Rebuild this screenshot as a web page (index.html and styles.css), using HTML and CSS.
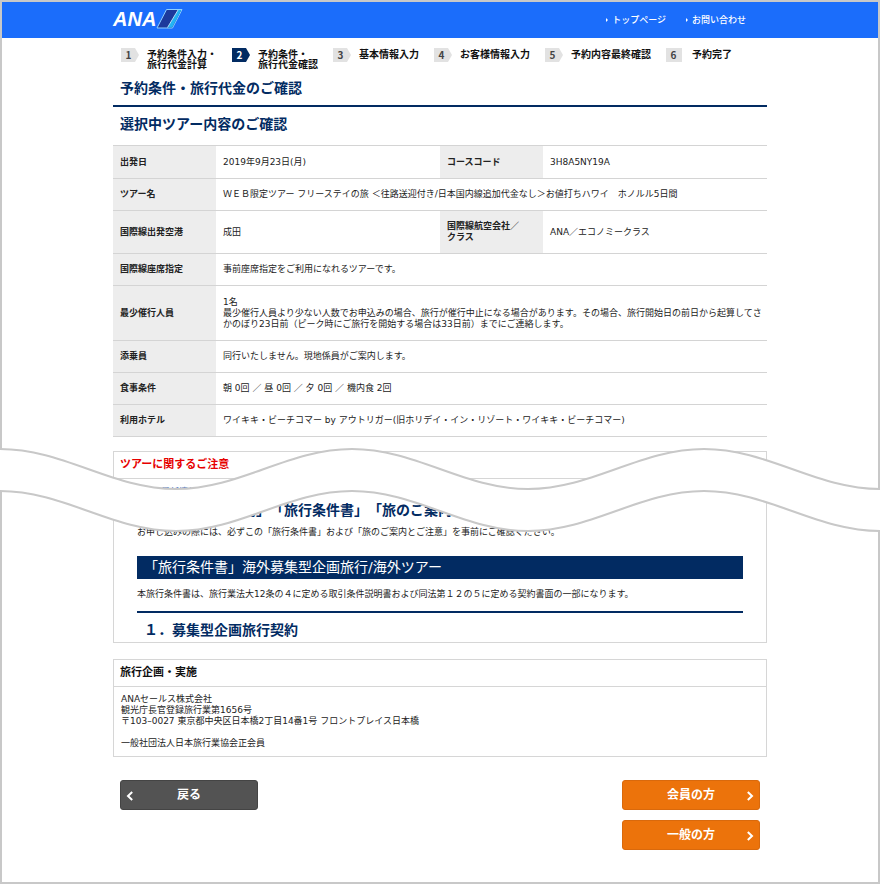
FILE: index.html
```html
<!DOCTYPE html>
<html lang="ja">
<head>
<meta charset="utf-8">
<meta name="viewport" content="width=device-width, initial-scale=1">
<title>予約条件・旅行代金のご確認</title>
<link rel="stylesheet" href="styles.css">
</head>
<body>
<div class="page">
  <header class="site-header">
    <div class="container header-row">
      <a class="logo" href="#">
        <span class="logo-word">ANA</span>
        <svg class="logo-mark" viewBox="0 0 27 20" aria-hidden="true">
          <path d="M10.500 .5H26L16.500 19H1z" fill="#1c3a9c" stroke="#8fd0ff" stroke-width="1"/>
          <path d="M22 1H25.300L16.200 18.500H11.500z" fill="#22b4f4"/>
          <path d="M22 1L11.500 18.500" stroke="#d8f2ff" stroke-width=".8"/>
        </svg>
      </a>
      <nav class="header-nav">
        <a href="#">トップページ</a>
        <a href="#">お問い合わせ</a>
      </nav>
    </div>
  </header>

  <main>
    <div class="container">
      <ol class="steps">
        <li><span class="badge">1</span><span>予約条件入力・<br>旅行代金計算</span></li>
        <li class="current" aria-current="step"><span class="badge">2</span><span>予約条件・<br>旅行代金確認</span></li>
        <li><span class="badge">3</span><span>基本情報入力</span></li>
        <li><span class="badge">4</span><span>お客様情報入力</span></li>
        <li><span class="badge">5</span><span>予約内容最終確認</span></li>
        <li><span class="badge">6</span><span>予約完了</span></li>
      </ol>

      <h1>予約条件・旅行代金のご確認</h1>
      <h2>選択中ツアー内容のご確認</h2>

      <table class="tour">
        <colgroup><col class="col-label"><col class="col-main"><col class="col-label"><col></colgroup>
        <tr class="roomy"><th scope="row">出発日</th><td>2019年9月23日(月)</td><th scope="row">コースコード</th><td>3H8A5NY19A</td></tr>
        <tr><th scope="row">ツアー名</th><td colspan="3">ＷＥＢ限定ツアー フリーステイの旅 ＜往路送迎付き/日本国内線追加代金なし＞お値打ちハワイ　ホノルル5日間</td></tr>
        <tr><th scope="row">国際線出発空港</th><td>成田</td><th scope="row">国際線航空会社／<br>クラス</th><td>ANA／エコノミークラス</td></tr>
        <tr><th scope="row">国際線座席指定</th><td colspan="3">事前座席指定をご利用になれるツアーです。</td></tr>
        <tr class="roomy"><th scope="row">最少催行人員</th><td colspan="3">1名<br>最少催行人員より少ない人数でお申込みの場合、旅行が催行中止になる場合があります。その場合、旅行開始日の前日から起算してさかのぼり23日前（ピーク時にご旅行を開始する場合は33日前）までにご連絡します。</td></tr>
        <tr><th scope="row">添乗員</th><td colspan="3">同行いたしません。現地係員がご案内します。</td></tr>
        <tr><th scope="row">食事条件</th><td colspan="3">朝 0回 ／ 昼 0回 ／ 夕 0回 ／ 機内食 2回</td></tr>
        <tr><th scope="row">利用ホテル</th><td colspan="3">ワイキキ・ビーチコマー by アウトリガー(旧ホリデイ・イン・リゾート・ワイキキ・ビーチコマー)</td></tr>
      </table>
    </div>

    <div class="torn">
      <section class="container">
        <div class="box">
          <h3 class="box-title alert">ツアーに関するご注意</h3>
          <div class="terms">
            <a class="terms-link" href="#">最新情報</a>
            <h2 class="terms-head">「ご旅行のご案内」「旅行条件書」「旅のご案内とご注意」</h2>
            <p>お申し込みの際には、必ずこの「旅行条件書」および「旅のご案内とご注意」を事前にご確認ください。</p>
            <h3 class="banner">「旅行条件書」海外募集型企画旅行/海外ツアー</h3>
            <p>本旅行条件書は、旅行業法大12条の４に定める取引条件説明書および同法第１２の５に定める契約書面の一部になります。</p>
            <h4 class="article">１．募集型企画旅行契約</h4>
          </div>
        </div>
      </section>
      <svg class="wave" viewBox="0 0 880 86" preserveAspectRatio="none" aria-hidden="true">
        <path class="wave-gap" d="M0 2C64 2 112 42 176 42S288 2 352 2S464 42 528 42S640 2 704 2S816 42 880 42V84C816 84 768 44 704 44S592 84 528 84S416 44 352 44S240 84 176 84S64 44 0 44z"/>
        <path class="wave-edge" d="M0 2C64 2 112 42 176 42S288 2 352 2S464 42 528 42S640 2 704 2S816 42 880 42"/>
        <path class="wave-edge" d="M0 44C64 44 112 84 176 84S288 44 352 44S464 84 528 84S640 44 704 44S816 84 880 84"/>
      </svg>
    </div>

    <div class="container">
      <section class="box company">
        <h3 class="box-title">旅行企画・実施</h3>
        <address>
          <p>ANAセールス株式会社<br>観光庁長官登録旅行業第1656号<br>〒103–0027 東京都中央区日本橋2丁目14番1号 フロントプレイス日本橋</p>
          <p>一般社団法人日本旅行業協会正会員</p>
        </address>
      </section>

      <div class="actions">
        <button class="btn back" type="button"><svg viewBox="0 0 8 10" aria-hidden="true"><path d="M6.200 1L2 5L6.200 9"/></svg>戻る</button>
        <div class="next-actions">
          <button class="btn next" type="button">会員の方<svg viewBox="0 0 8 10" aria-hidden="true"><path d="M1.800 1L6 5L1.800 9"/></svg></button>
          <button class="btn next" type="button">一般の方<svg viewBox="0 0 8 10" aria-hidden="true"><path d="M1.800 1L6 5L1.800 9"/></svg></button>
        </div>
      </div>
    </div>
  </main>
</div>
</body>
</html>
```
FILE: styles.css
```css
* {
  box-sizing: border-box;
}

body {
  margin: 0;
  color: #222;
  background: #fff;
  font: 9px/11px "DejaVu Sans", "Noto Sans CJK JP", sans-serif;
}

h1, h2, h3, h4, p, ol {
  margin: 0;
  padding: 0;
}

.page {
  min-height: 100vh;
  border: 2px solid #c8c8c8;
}

.container {
  max-width: 654px;
  margin: 0 auto;
}

/* Header */
.site-header {
  background: #1b6dfb;
}

.header-row {
  display: flex;
  justify-content: space-between;
  align-items: center;
  height: 36px;
  padding-right: 21px;
}

.logo {
  display: flex;
  align-items: center;
  padding-bottom: 3px;
  color: #fff;
  text-decoration: none;
}

.logo-word {
  font: italic bold 20px/20px "Liberation Sans", sans-serif;
}

.logo-mark {
  width: 27px;
  height: 20px;
}

.header-nav {
  display: flex;
  gap: 20px;
}

.header-nav a {
  display: flex;
  align-items: center;
  gap: 4px;
  color: #fff;
  font-weight: 500;
  text-decoration: none;
}

.header-nav a::before {
  content: "";
  border: 2px solid transparent;
  border-left-color: #fff;
  border-right-width: 0;
}

/* Progress */
.steps {
  display: flex;
  gap: 15px;
  padding: 10px 8px 0;
  list-style: none;
  color: #111;
  font-size: 10px;
  font-weight: 700;
  line-height: 10px;
  white-space: nowrap;
}

.steps li {
  display: flex;
  gap: 8px;
}

.steps li > span:last-child {
  padding-top: 2px;
}

.badge {
  width: 18px;
  height: 14px;
  padding-right: 3px;
  background: #e2e2e2;
  clip-path: polygon(0 0, 14px 0, 100% 50%, 14px 100%, 0 100%);
  color: #444;
  font-family: "Noto Sans CJK JP", sans-serif;
  line-height: 14px;
  text-align: center;
}

.steps li:last-child .badge {
  clip-path: inset(0 2px 0 0);
}

.current .badge {
  background: #022b62;
  color: #fff;
}

/* Headings */
h1, h2 {
  color: #022b62;
  font-size: 14px;
  line-height: 20px;
}

h1 {
  padding: 8px 7px 7px;
  border-bottom: 2px solid #022b62;
}

h2 {
  padding: 7px 7px 11px;
}

/* Tour details */
.tour {
  width: 100%;
  border-collapse: collapse;
  table-layout: fixed;
}

.col-label {
  width: 103px;
}

.col-main {
  width: 224px;
}

.tour tr {
  border-top: 1px solid #d4d4d4;
  border-bottom: 1px solid #d4d4d4;
}

.tour th,
.tour td {
  padding: 10px 0 10px 7px;
  text-align: left;
  vertical-align: middle;
}

.tour .roomy th,
.tour .roomy td {
  padding-top: 11px;
}

.tour th {
  background: #ededed;
}

/* Bordered boxes */
.box {
  border: 1px solid #d6d6d6;
}

.box-title {
  padding: 5px 6px;
  border-bottom: 1px solid #d6d6d6;
  color: #111;
  font-size: 11px;
  line-height: 16px;
}

.alert {
  color: #e60000;
}

/* Break between the two parts of the page */
.torn {
  position: relative;
  margin-top: 14px;
}

.wave {
  position: absolute;
  top: -4px;
  left: -2px;
  width: calc(100% + 4px);
  height: 86px;
}

.wave-gap {
  fill: #fff;
}

.wave-edge {
  fill: none;
  stroke: #c8c8c8;
  stroke-width: 2px;
}

.terms {
  padding: 8px 23px 2px;
}

.terms-link {
  display: block;
  padding-left: 24px;
  color: #1a52b8;
}

.terms-head {
  padding: 2px 7px 7px;
  text-spacing-trim: space-all;
}

.banner {
  margin: 18px 0 10px;
  padding: 0 7px;
  background: #022b62;
  color: #fff;
  font-size: 14px;
  font-weight: 400;
  line-height: 23px;
}

.article {
  margin-top: 11px;
  padding: 7px 7px 0;
  border-top: 2px solid #022b62;
  color: #022b62;
  font-size: 14px;
  line-height: 20px;
}

.company {
  margin-top: 16px;
}

address {
  padding: 7px;
  font-style: normal;
}

address p + p {
  margin-top: 11px;
}

/* Actions */
.actions {
  display: flex;
  justify-content: space-between;
  align-items: flex-start;
  padding: 23px 7px;
}

.next-actions {
  display: grid;
  gap: 10px;
}

.btn {
  position: relative;
  width: 138px;
  height: 30px;
  padding: 0 0 2px;
  border: 1px solid;
  border-radius: 3px;
  color: #fff;
  font: bold 12px/18px "Noto Sans CJK JP", sans-serif;
}

.btn svg {
  position: absolute;
  top: 10px;
  width: 8px;
  height: 10px;
  fill: none;
  stroke: #fff;
  stroke-width: 2px;
}

.back {
  border-color: #444;
  background: #535353;
}

.back svg {
  left: 5px;
}

.next {
  border-color: #d9690c;
  background: #ec730b;
}

.next svg {
  right: 5px;
}
```
